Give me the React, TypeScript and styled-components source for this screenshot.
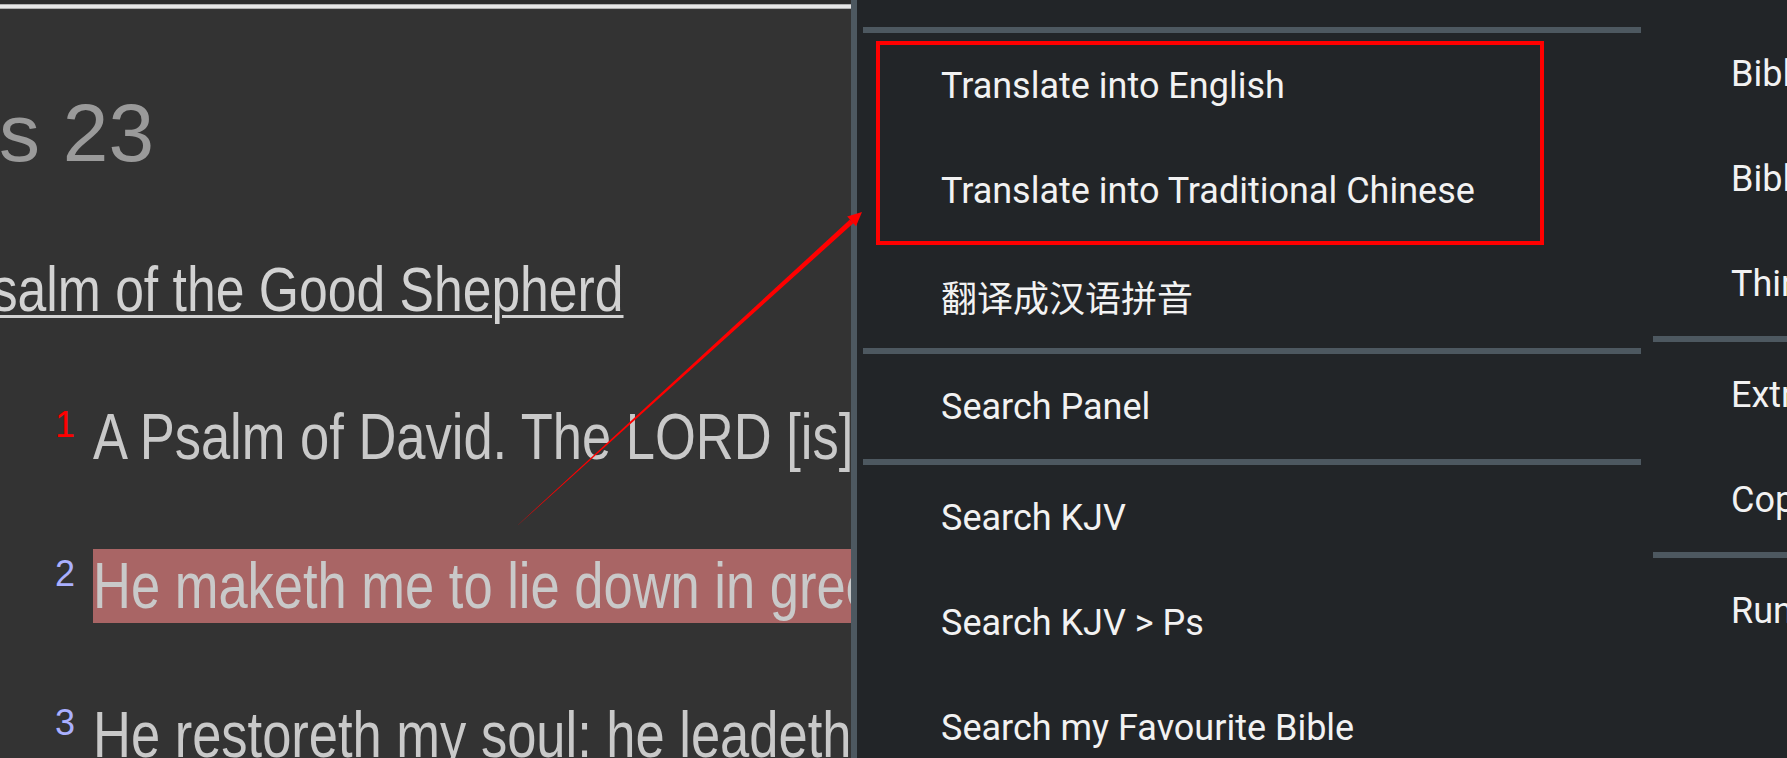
import styled, { createGlobalStyle } from "styled-components";

const GlobalStyle = createGlobalStyle`
  html, body {
    margin: 0;
    padding: 0;
    background: #222528;
  }
  body {
    width: 1787px;
    height: 758px;
    overflow: hidden;
  }
`;

const verses = [
  { n: 1, text: "A Psalm of David. The LORD [is] my shepherd; I shall not want.", first: true },
  { n: 2, text: "He maketh me to lie down in green pastures: he leadeth me beside the still waters.", marked: true },
  { n: 3, text: "He restoreth my soul: he leadeth me in the paths of righteousness for his name's sake." },
];

type Entry = { label?: string; sep?: boolean };

const leftMenu: Entry[] = [
  { sep: true },
  { label: "Translate into English" },
  { label: "Translate into Traditional Chinese" },
  { label: "翻译成汉语拼音" },
  { sep: true },
  { label: "Search Panel" },
  { sep: true },
  { label: "Search KJV" },
  { label: "Search KJV > Ps" },
  { label: "Search my Favourite Bible" },
];

const rightMenu: Entry[] = [
  { label: "Bible Chapter" },
  { label: "Bible Verse" },
  { label: "Third-party Dictionaries" },
  { sep: true },
  { label: "Extract All Bible References" },
  { label: "Copy" },
  { sep: true },
  { label: "Run as Command" },
];

export default function App() {
  return (
    <>
      <GlobalStyle />
      <Screen>
        <Reader>
          <TopRule />
          <Title>
            <span>Psalms 23</span>
          </Title>
          <Heading>
            <Narrow $origin="right">Psalm of the Good Shepherd</Narrow>
          </Heading>
          {verses.map((v) => (
            <Verse key={v.n}>
              <VerseNo $first={v.first}>{v.n}</VerseNo>
              <VerseText $marked={v.marked} $origin="left">
                {v.text}
              </VerseText>
            </Verse>
          ))}
        </Reader>
        <Divider />
        <Menu>
          <MenuColumn $offset={27}>
            {leftMenu.map((e, i) =>
              e.sep ? <Separator key={i} /> : <MenuItem key={i}>{e.label}</MenuItem>
            )}
          </MenuColumn>
          <MenuColumn $offset={21}>
            {rightMenu.map((e, i) =>
              e.sep ? <Separator key={i} /> : <MenuItem key={i}>{e.label}</MenuItem>
            )}
          </MenuColumn>
        </Menu>
        <Annotation viewBox="0 0 1787 758">
          <rect x="878" y="43" width="664" height="200" fill="none" stroke="#ff0000" strokeWidth="4" />
          <polygon points="517.9,524.9 849.9,219.5 853.3,223.3 518.1,525.1" fill="#ff0000" />
          <polygon points="862,212 847.2,216.6 856,226.2" fill="#ff0000" />
        </Annotation>
      </Screen>
    </>
  );
}

const Screen = styled.div`
  position: relative;
  display: flex;
  width: 1787px;
  height: 758px;
  overflow: hidden;
`;

const Reader = styled.div`
  width: 851px;
  flex: none;
  background: #333333;
  border-top: 4px solid #2c2c2c;
  overflow: hidden;
  display: flex;
  flex-direction: column;
  font-family: "Liberation Sans", Arial, sans-serif;
  white-space: nowrap;
`;

const TopRule = styled.div`
  height: 5px;
  flex: none;
  background: linear-gradient(#8e8e8e 0%, #e6e6e6 25%, #e6e6e6 75%, #8a8a8a 100%);
`;

const Title = styled.h1`
  margin: 77px 0 0;
  width: 154px;
  display: flex;
  justify-content: flex-end;
  font-weight: normal;
  font-size: 82px;
  line-height: normal;
  color: #9a9a9a;
`;

const Heading = styled.h2`
  margin: 73px 0 0;
  width: 624px;
  display: flex;
  justify-content: flex-end;
  font-weight: normal;
  font-size: 63px;
  line-height: normal;
  color: #d2d2d2;
`;

/* the reading font is a narrow grotesque; squeeze the installed sans to its width */
const Narrow = styled.span<{ $origin: "left" | "right" }>`
  display: inline-block;
  transform: scaleX(0.82);
  transform-origin: ${(p) => p.$origin} center;
  text-decoration: underline;
  text-decoration-thickness: 3px;
  text-underline-offset: 4px;
`;

const Verse = styled.p`
  margin: 75px 0 0;
  padding-left: 55px;
  display: flex;
  align-items: flex-start;
`;

const VerseNo = styled.span<{ $first?: boolean }>`
  width: 38px;
  flex: none;
  margin-top: 7px;
  font-size: 36px;
  line-height: 1;
  color: ${(p) => (p.$first ? "#ff0000" : "#aab0ff")};
`;

const VerseText = styled.span<{ $marked?: boolean; $origin: "left" | "right" }>`
  display: inline-block;
  transform: scaleX(0.82);
  transform-origin: ${(p) => p.$origin} center;
  font-size: 64px;
  line-height: normal;
  color: #c9c9c9;
  background: ${(p) => (p.$marked ? "#a96565" : "transparent")};
`;

const Divider = styled.div`
  width: 6px;
  flex: none;
  background: #4d5860;
`;

const Menu = styled.div`
  flex: 1;
  display: flex;
  background: #222528;
  overflow: hidden;
  font-family: Roboto, "Noto Sans CJK SC", sans-serif;
  white-space: nowrap;
`;

const MenuColumn = styled.div<{ $offset: number }>`
  width: 790px;
  flex: none;
  padding-top: ${(p) => p.$offset}px;
  display: flex;
  flex-direction: column;
`;

const MenuItem = styled.div`
  height: 105px;
  flex: none;
  display: flex;
  align-items: center;
  padding-left: 84px;
  font-size: 36px;
  color: #f2f2f2;
`;

const Separator = styled.div`
  height: 6px;
  flex: none;
  margin: 0 6px;
  background: #4d5860;
`;

const Annotation = styled.svg`
  position: absolute;
  left: 0;
  top: 0;
  width: 1787px;
  height: 758px;
  pointer-events: none;
`;
